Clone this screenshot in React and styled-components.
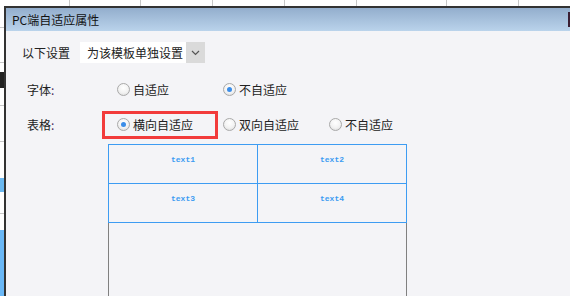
import React from "react";
import styled, { createGlobalStyle } from "styled-components";

const GlobalStyle = createGlobalStyle`
  html, body { margin: 0; padding: 0; }
  body {
    width: 570px;
    height: 296px;
    overflow: hidden;
    font-family: "Noto Sans CJK SC", "Noto Sans", sans-serif;
  }
`;

// 背景のスプレッドシート（ダイアログの後ろ）
const Sheet = styled.div`
  position: relative;
  width: 570px;
  height: 296px;
  overflow: hidden;
  background: #fff;
`;

const GridLine = styled.div`
  position: absolute;
  background: ${(p) => p.color || "#c8c8c8"};
  left: ${(p) => p.x}px;
  top: ${(p) => p.y}px;
  width: ${(p) => p.w}px;
  height: ${(p) => p.h}px;
`;

const Dialog = styled.div`
  position: absolute;
  left: 4px;
  top: 6px;
  right: -10px;
  bottom: -10px;
  border-top: 2px solid #333;
  border-left: 2px solid #333;
  background: #f4f4f7;
  display: flex;
  flex-direction: column;
`;

const TitleBar = styled.div`
  position: relative;
  flex-shrink: 0;
  height: 23px;
  display: flex;
  align-items: center;
  padding-left: 6px;
  background: linear-gradient(#93aecd, #bad3eb);
  font-size: 12px;
  color: #111;
`;

const CloseEdge = styled.div`
  position: absolute;
  right: 10px;
  top: 4px;
  width: 2px;
  height: 15px;
  background: #3b1f33;
`;

const Body = styled.div`
  flex: 1;
  min-height: 0;
  padding-left: 16px;
  font-size: 12px;
  color: #222;
`;

const SettingRow = styled.div`
  display: flex;
  align-items: center;
  height: 21px;
  margin-top: 11px;
`;

const SettingLabel = styled.div`
  width: 58px;
`;

const Select = styled.div`
  display: flex;
  height: 21px;
  width: 125px;
`;

const SelectValue = styled.div`
  flex: 1;
  background: #fff;
  padding-left: 7px;
  display: flex;
  align-items: center;
`;

const SelectArrow = styled.div`
  width: 19px;
  background: #dadada;
  display: flex;
  align-items: center;
  justify-content: center;
`;

const OptionRow = styled.div`
  display: flex;
  align-items: stretch;
  height: 28px;
  margin-top: ${(p) => p.gap}px;
  padding-left: 5px;
`;

const OptionLabel = styled.div`
  width: 90px;
  display: flex;
  align-items: center;
  .colon { color: #4a2a5a; }
`;

const Option = styled.div`
  position: relative;
  width: 106px;
  display: flex;
  align-items: center;
`;

const Radio = styled.span`
  width: 13px;
  height: 13px;
  box-sizing: border-box;
  border-radius: 50%;
  border: 1px solid #a9a9a9;
  background: radial-gradient(circle at 50% 35%, #ffffff 0%, #f2f2f2 55%, #d6d6d6 100%);
  margin-right: 3px;
  display: flex;
  align-items: center;
  justify-content: center;
  &::after {
    content: "";
    width: 5px;
    height: 5px;
    border-radius: 50%;
    background: ${(p) => (p.checked ? "#3b8de8" : "transparent")};
  }
`;

const Highlight = styled.div`
  position: absolute;
  left: -15px;
  top: 1px;
  width: 116px;
  height: 28px;
  box-sizing: border-box;
  border: 3px solid #f23b3b;
  pointer-events: none;
`;

const Preview = styled.div`
  margin-left: 86px;
  margin-top: 6px;
  width: 297px;
  height: 200px;
  border-left: 1px solid #808080;
  border-right: 1px solid #808080;
`;

const Table = styled.div`
  display: grid;
  grid-template-columns: 149px 149px;
  grid-auto-rows: 39px;
  margin: 0 -1px;
  border-top: 1px solid #3d9cf2;
  border-left: 1px solid #3d9cf2;
`;

const Cell = styled.div`
  border-right: 1px solid #3d9cf2;
  border-bottom: 1px solid #3d9cf2;
  text-align: center;
  padding-top: 10px;
  box-sizing: border-box;
  font-family: "Liberation Mono", "DejaVu Sans Mono", monospace;
  font-size: 8px;
  font-weight: bold;
  color: #3d9cf2;
`;

const topLines = [69, 140, 212, 284, 356, 446, 518];
const leftLines = [27, 62, 105, 141, 213];

const App = () => {
  return (
    <Sheet>
      <GlobalStyle />
      {topLines.map((x) => (
        <GridLine key={"t" + x} x={x} y={0} w={1} h={6} />
      ))}
      {leftLines.map((y) => (
        <GridLine key={"l" + y} x={0} y={y} w={4} h={1} />
      ))}
      <GridLine x={0} y={72} w={4} h={16} color="#222" />
      <GridLine x={0} y={178} w={4} h={14} color="#6ab8f0" />
      <GridLine x={0} y={230} w={4} h={66} color="#6ab8f7" />
      <Dialog>
        <TitleBar>
          PC端自适应属性
          <CloseEdge />
        </TitleBar>
        <Body>
          <SettingRow>
            <SettingLabel>以下设置</SettingLabel>
            <Select>
              <SelectValue>为该模板单独设置</SelectValue>
              <SelectArrow>
                <svg width="9" height="6" viewBox="0 0 9 6">
                  <polyline points="1,1 4.5,4.5 8,1" fill="none" stroke="#555" strokeWidth="1.2" />
                </svg>
              </SelectArrow>
            </Select>
          </SettingRow>
          <OptionRow gap={12}>
            <OptionLabel>字体<span className="colon">:</span></OptionLabel>
            <Option><Radio />自适应</Option>
            <Option><Radio checked />不自适应</Option>
          </OptionRow>
          <OptionRow gap={7}>
            <OptionLabel>表格<span className="colon">:</span></OptionLabel>
            <Option>
              <Highlight />
              <Radio checked />横向自适应
            </Option>
            <Option><Radio />双向自适应</Option>
            <Option><Radio />不自适应</Option>
          </OptionRow>
          <Preview>
            <Table>
              <Cell>text1</Cell>
              <Cell>text2</Cell>
              <Cell>text3</Cell>
              <Cell>text4</Cell>
            </Table>
          </Preview>
        </Body>
      </Dialog>
    </Sheet>
  );
};

export default App;
